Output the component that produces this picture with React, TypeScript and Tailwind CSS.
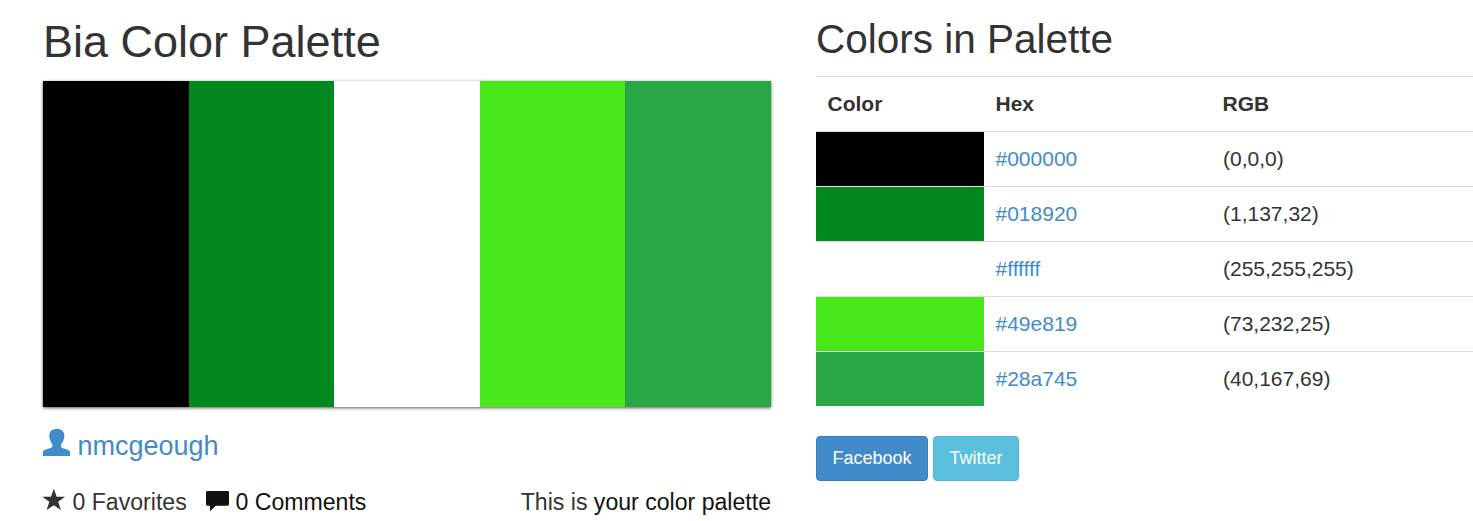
const colors = [
  { hex: '#000000', rgb: '(0,0,0)', bg: 'bg-[#000000]' },
  { hex: '#018920', rgb: '(1,137,32)', bg: 'bg-[#018920]' },
  { hex: '#ffffff', rgb: '(255,255,255)', bg: 'bg-[#ffffff]' },
  { hex: '#49e819', rgb: '(73,232,25)', bg: 'bg-[#49e819]' },
  { hex: '#28a745', rgb: '(40,167,69)', bg: 'bg-[#28a745]' },
];

function UserIcon() {
  return (
    <svg className="h-[27px] w-[27px] shrink-0" viewBox="0 0 81 81" fill="currentColor" aria-hidden="true">
      <path d="M41 0C26 0 19 7 19 20C19 26 20 28 21 31C22 38 26 43 28 46V51C28 54 26 56 22 57L5 63C1 65 0 67 0 71V81H81V71C81 67 80 65 76 63L59 57C55 56 54 54 54 51V46C57 43 61 38 62 31C64 28 64 25 64 20C64 7 56 0 41 0Z" />
    </svg>
  );
}

function StarIcon() {
  return (
    <svg className="-ml-px h-[21px] w-[23px] shrink-0" viewBox="0 0 69 63" fill="currentColor" aria-hidden="true">
      <path d="M35.5 -1L44 23H69L48.5 38.5L56.5 63L35.5 48.5L14 63L22 38.5L1 23H27Z" />
    </svg>
  );
}

function CommentIcon() {
  return (
    <svg className="h-[21px] w-[23px] shrink-0" viewBox="0 0 69 63" fill="currentColor" aria-hidden="true">
      <path d="M4 0H65Q69 0 69 4V40Q69 44 65 44H29L12 61V44H4Q0 44 0 40V4Q0 0 4 0Z" />
    </svg>
  );
}

export default function App() {
  return (
    <div className="flex h-[521px] w-full overflow-hidden bg-white pl-[43px] font-['Liberation_Sans',Arial,sans-serif] text-[21px] leading-[30px] text-[#333]">
      <section className="w-[728px] shrink-0">
        <h1 className="mt-[17px] h-[64px] text-[45px] leading-[50px]">Bia Color Palette</h1>
        <div className="flex h-[326px] shadow-[0_1px_3px_rgba(0,0,0,0.65)]">
          {colors.map((c) => (
            <div key={c.hex} className={`flex-1 ${c.bg}`} />
          ))}
        </div>
        <a href="#" className="mt-[22px] flex h-[34px] gap-[7.5px] text-[27px] leading-[34px] text-[#428bca]">
          <UserIcon />
          <span>nmcgeough</span>
        </a>
        <div className="mt-[24px] flex justify-between text-[23.1px] leading-[30px]">
          <div className="flex">
            <span className="flex gap-[7.5px]">
              <span className="flex pt-[2px]"><StarIcon /></span>
              <span>0 Favorites</span>
            </span>
            <a href="#" className="ml-[19px] flex gap-[6.75px] text-[#111]">
              <span className="flex pt-[4px]"><CommentIcon /></span>
              <span>0 Comments</span>
            </a>
          </div>
          <p>
            This is <span className="text-[#111]">your color palette</span>
          </p>
        </div>
      </section>

      <section className="ml-[45px] min-w-0 flex-1">
        <h2 className="mt-[17px] h-[59px] text-[40.5px] leading-[45px]">Colors in Palette</h2>
        <table className="w-full table-fixed border-separate border-spacing-0 text-left">
          <colgroup>
            <col className="w-[168px]" />
            <col className="w-[227px]" />
            <col />
          </colgroup>
          <thead>
            <tr className="h-[55px]">
              <th className="border-t border-[#ddd] px-[11.5px] font-bold">Color</th>
              <th className="border-t border-[#ddd] px-[11.5px] font-bold">Hex</th>
              <th className="border-t border-[#ddd] px-[11.5px] font-bold">RGB</th>
            </tr>
          </thead>
          <tbody>
            {colors.map((c) => (
              <tr key={c.hex} className="h-[55px]">
                <td className={`border-t border-[#ddd] ${c.bg}`} />
                <td className="border-t border-[#ddd] px-[11.5px]">
                  <a href="#" className="text-[#428bca]">{c.hex}</a>
                </td>
                <td className="border-t border-[#ddd] px-3">{c.rgb}</td>
              </tr>
            ))}
          </tbody>
        </table>
        <div className="mt-[30px] flex gap-[5px] text-[18px] text-white">
          <button className="h-[45px] w-[112px] rounded-[4px] border border-[#357ebd] bg-[#428bca] pb-px">Facebook</button>
          <button className="h-[45px] w-[86px] rounded-[4px] border border-[#46b8da] bg-[#5bc0de] pb-px">Twitter</button>
        </div>
      </section>
    </div>
  );
}
